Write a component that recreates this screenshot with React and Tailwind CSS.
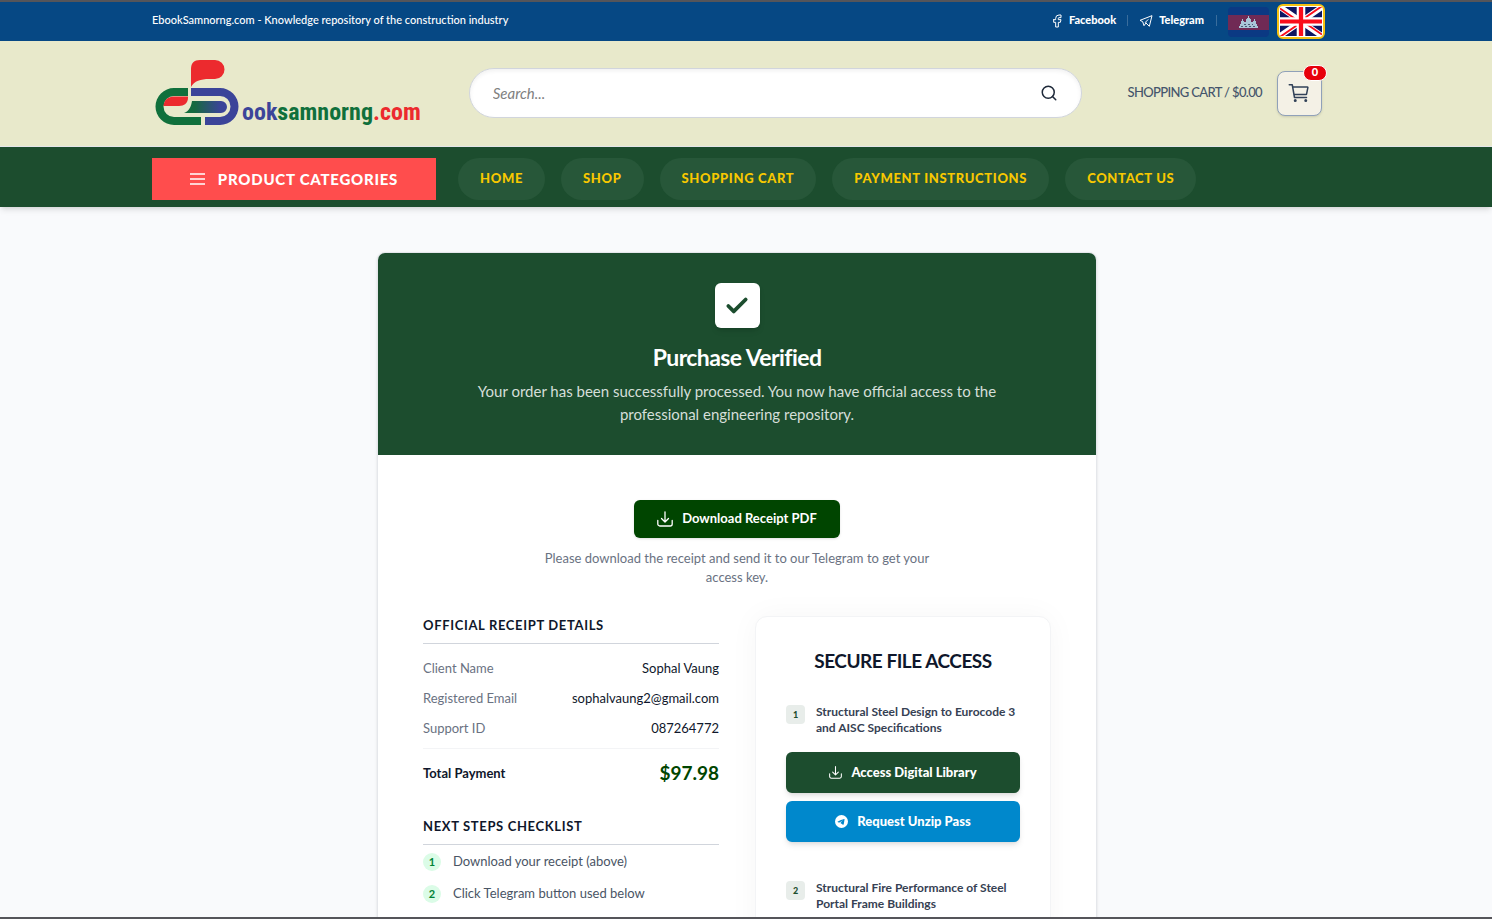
import React from "react";
import { TbBrandFacebook, TbBrandTelegram } from "react-icons/tb";
import { FiSearch } from "react-icons/fi";
import { BsTelegram } from "react-icons/bs";
import { IoCartOutline } from "react-icons/io5";
import { LuCheck } from "react-icons/lu";

function Logo() {
  return (
    <svg viewBox="0 0 268 72" className="h-[72px] w-[268px]" role="img" aria-label="Ebooksamnorng.com">
      <defs>
        <linearGradient id="page" x1="0" x2="1" y1="0" y2="0">
          <stop offset="0" stopColor="#10703c" />
          <stop offset="0.25" stopColor="#17693f" />
          <stop offset="0.85" stopColor="#3b4499" />
        </linearGradient>
      </defs>
      <path d="M36 30V12C36 6 39 3 45 3H60A9.500 9.500 0 0 1 60 22H54C46 22 39 24 36 30Z" fill="#ec2a2e" />
      <path d="M33 31H19A18.200 18.200 0 0 0 19 68H46V60H19A10.500 10.500 0 0 1 19 39H33Z" fill="#10703c" />
      <path d="M8.500 49C9 43 13 39.500 19 39.500H33V41C33 46 29 49 24 49Z" fill="#ec2a2e" />
      <path d="M36 31H65A18.500 18.500 0 0 1 65 68H50V60H65A10.500 10.500 0 0 0 65 39H36Z" fill="#3b4499" />
      <path d="M37 44H66A6 6 0 0 1 66 56H29C34 54 36 50 37 44Z" fill="url(#page)" />
      <text x="87" y="63" fontSize="24" fontWeight="700" fontFamily="'Roboto Condensed','Liberation Sans Narrow',sans-serif">
        <tspan fill="#3b4499">ook</tspan>
        <tspan fill="#10703c">samnorng</tspan>
        <tspan fill="#ec2a2e">.com</tspan>
      </text>
    </svg>
  );
}

function CambodiaFlag() {
  return (
    <svg viewBox="0 0 41 30" className="h-[30px] w-[41px] rounded-sm">
      <rect width="41" height="30" fill="#0b3983" />
      <rect y="8" width="41" height="15" fill="#702a55" />
      <path
        d="M11 21V19H12V17H13V14H14V12H15V14H16V15H18V12H19V11H20V9H21V11H22V12H23V15H25V14H26V12H27V14H28V17H29V19H30V21Z"
        fill="#a9c6d8"
      />
      <path d="M13 19.500H28M16 17.500H25" stroke="#4a5a76" strokeDasharray="2 2" />
    </svg>
  );
}

function UnitedKingdomFlag() {
  return (
    <svg viewBox="0 0 44 31" preserveAspectRatio="none" className="h-full w-full">
      <rect width="44" height="31" fill="#0d1560" />
      <path d="M0 0L44 31M44 0L0 31" stroke="#fff" strokeWidth="6" />
      <path d="M0 1.500L20 15.500M24 15.500L44 29.500M44 -1L22 14.500M22 16.500L0 32" stroke="#fa0d1b" strokeWidth="2" />
      <path d="M22 0V31M0 15.500H44" stroke="#fff" strokeWidth="9" />
      <path d="M22 0V31M0 15.500H44" stroke="#fa0d1b" strokeWidth="4.500" />
    </svg>
  );
}

function DownloadIcon({ className }) {
  return (
    <svg
      viewBox="0 0 16 16"
      className={className}
      fill="none"
      stroke="currentColor"
      strokeWidth="1.300"
      strokeLinecap="round"
      strokeLinejoin="round"
      aria-hidden="true"
    >
      <path d="M8 0.800V10.800M4.500 7.500L8 11L11.500 7.500M0.800 9.500V13A2 2 0 0 0 2.800 15H13.200A2 2 0 0 0 15.200 13V9.500" />
    </svg>
  );
}

const navItems = ["HOME", "SHOP", "SHOPPING CART", "PAYMENT INSTRUCTIONS", "CONTACT US"];

const receipt = [
  ["Client Name", "Sophal Vaung"],
  ["Registered Email", "sophalvaung2@gmail.com"],
  ["Support ID", "087264772"],
];

const steps = ["Download your receipt (above)", "Click Telegram button used below"];

const files = [
  { name: "Structural Steel Design to Eurocode 3 and AISC Specifications", ready: true },
  { name: "Structural Fire Performance of Steel Portal Frame Buildings", ready: false },
];

function Container({ className, children }) {
  return (
    <div className="pr-[18px]">
      <div className={"mx-auto w-full max-w-[1170px] " + className}>{children}</div>
    </div>
  );
}

function TopBar() {
  return (
    <div className="bg-[#064884] text-[11px] text-white">
      <Container className="flex h-[39px] items-center justify-between">
        <p className="pb-[2px] font-medium">EbookSamnorng.com - Knowledge repository of the construction industry</p>
        <div className="flex items-center">
          <a href="#facebook" className="flex items-center gap-1 pb-[2px] font-black">
            <TbBrandFacebook className="size-4" strokeWidth={1.5} />
            Facebook
          </a>
          <span className="mr-[10px] mb-[2px] ml-[11px] h-[11px] w-px bg-[#3a6d9c]" />
          <a href="#telegram" className="flex items-center gap-[5px] pb-[2px] font-black">
            <TbBrandTelegram className="size-4" strokeWidth={1.5} />
            Telegram
          </a>
          <span className="mr-[11px] mb-[2px] ml-3 h-[11px] w-px bg-[#3a6d9c]" />
          <button type="button" aria-label="Khmer">
            <CambodiaFlag />
          </button>
          <button
            type="button"
            aria-label="English"
            className="-mr-[3px] ml-2 h-[35px] w-[48px] overflow-hidden rounded-md border-2 border-[#f5c211] bg-white p-px"
          >
            <UnitedKingdomFlag />
          </button>
        </div>
      </Container>
    </div>
  );
}

function Header() {
  return (
    <header className="border-b border-gray-200 bg-[#e8e9cb]">
      <Container className="flex h-[105px] items-center justify-between pb-px">
        <a href="#home" className="pl-[3px]">
          <Logo />
        </a>
        <form className="flex h-[50px] w-[613px] items-center rounded-full border border-gray-300 bg-white pr-[23px] pl-[23px] shadow-[inset_0_2px_4px_rgba(0,0,0,0.06)]">
          <input
            type="search"
            aria-label="Search"
            placeholder="Search..."
            className="min-w-0 flex-1 bg-transparent text-[15px] italic outline-none placeholder:text-[#808080]"
          />
          <button type="submit" aria-label="Submit search" className="text-gray-800">
            <FiSearch className="size-[18px]" />
          </button>
        </form>
        <div className="flex items-center gap-[15px]">
          <span className="text-[13px] font-medium tracking-tighter text-slate-600">SHOPPING CART / $0.00</span>
          <button
            type="button"
            aria-label="Open cart"
            className="relative flex size-[45px] items-center justify-center rounded-lg border border-slate-400 bg-[#f4f1e6] text-slate-700 shadow-sm"
          >
            <IoCartOutline className="size-6" />
            <span className="absolute -top-[7px] -right-[6px] flex h-4 w-6 items-center justify-center rounded-full border border-white bg-[#e7000b] text-[11px] font-black text-white">
              0
            </span>
          </button>
        </div>
      </Container>
    </header>
  );
}

function Nav() {
  return (
    <nav className="relative bg-[#1c4d2e] shadow-md">
      <Container className="flex h-[60px] items-center gap-[22px]">
        <button
          type="button"
          className="mt-1 flex h-[42px] w-[284px] items-center justify-center gap-[13px] bg-[#ff4d4d] text-[15px] font-black tracking-wider text-white"
        >
          <svg viewBox="0 0 15 13" className="h-[13px] w-[15px]" fill="none" stroke="currentColor" strokeWidth="1.500">
            <path d="M0 1H15M0 6H15M0 11H15" />
          </svg>
          PRODUCT CATEGORIES
        </button>
        <div className="mt-1 flex gap-4">
          {navItems.map((item) => (
            <a
              key={item}
              href="#nav"
              className="flex h-[42px] items-center rounded-full bg-[#275739] px-[22px] text-[13px] font-black tracking-wider text-[#f8c800]"
            >
              {item}
            </a>
          ))}
        </div>
      </Container>
    </nav>
  );
}

function SectionTitle({ children }) {
  return (
    <h2 className="border-b border-gray-300 pb-2 text-[13px] leading-[19px] font-bold tracking-wider text-slate-900">
      {children}
    </h2>
  );
}

function ReceiptDetails() {
  return (
    <div>
      <SectionTitle>OFFICIAL RECEIPT DETAILS</SectionTitle>
      <dl className="pt-[14px] text-[13px] leading-5">
        {receipt.map(([label, value]) => (
          <div key={label} className="mb-[10px] flex justify-between">
            <dt className="text-gray-500">{label}</dt>
            <dd className="text-slate-900">{value}</dd>
          </div>
        ))}
        <div className="flex items-center justify-between border-t border-gray-100 pt-[10px]">
          <dt className="font-bold text-slate-900">Total Payment</dt>
          <dd className="text-[19px] leading-7 font-bold text-[#004500]">$97.98</dd>
        </div>
      </dl>
      <div className="pt-[30px]">
        <SectionTitle>NEXT STEPS CHECKLIST</SectionTitle>
        <ol className="flex flex-col gap-3 pt-[6px]">
          {steps.map((step, i) => (
            <li key={step} className="flex gap-3 text-[13px] leading-5 text-gray-600">
              <span className="mt-[2px] flex size-[18px] shrink-0 items-center justify-center rounded-full bg-green-100 text-[11px] font-bold text-green-700">
                {i + 1}
              </span>
              {step}
            </li>
          ))}
        </ol>
      </div>
    </div>
  );
}

function FileAccess() {
  return (
    <div className="rounded-xl border border-gray-100 bg-white px-[30px] pt-[30px] pb-[30px] shadow-[0_0_30px_rgba(0,0,0,0.04)]">
      <h2 className="mb-[30px] text-center text-[19px] leading-[27px] font-bold tracking-tight text-slate-900">
        SECURE FILE ACCESS
      </h2>
      <div className="flex flex-col gap-[38px]">
        {files.map(({ name, ready }, i) => (
          <div key={name}>
            <div className="flex gap-[11px]">
              <span className="mt-px flex size-[19px] shrink-0 items-center justify-center rounded-sm bg-[#e8edea] text-[9px] font-black text-[#1c4d2e]">
                {i + 1}
              </span>
              <p className="text-[12px] leading-4 font-bold text-gray-700">{name}</p>
            </div>
            {ready && (
              <>
                <a
                  href="#library"
                  className="mt-4 flex h-[41px] items-center justify-center gap-[9px] rounded-md bg-[#1c4d2e] text-[13px] font-black text-white shadow-md"
                >
                  <DownloadIcon className="size-[13px]" />
                  Access Digital Library
                </a>
                <a
                  href="#unzip"
                  className="mt-2 flex h-[41px] items-center justify-center gap-[9px] rounded-md bg-[#0088cc] text-[13px] font-black text-white shadow-md"
                >
                  <BsTelegram className="size-[13px]" />
                  Request Unzip Pass
                </a>
              </>
            )}
          </div>
        ))}
      </div>
    </div>
  );
}

export default function App() {
  return (
    <div className="flex h-screen flex-col border-y-2 border-[#55555a] bg-[#f9fafc] font-['Lato',sans-serif]">
      <TopBar />
      <Header />
      <Nav />
      <main className="min-h-0 flex-1 overflow-y-auto pt-[45px] pr-[18px] [scrollbar-width:none]">
        <article className="mx-auto max-w-[720px] overflow-hidden rounded-lg border border-gray-200 bg-white shadow-sm">
          <div className="flex flex-col items-center bg-[#1c4d2e] pt-[30px] pb-[29px] text-center">
            <div className="flex size-[45px] items-center justify-center rounded-md bg-white text-[#1c4d2e] shadow-md">
              <LuCheck className="size-[26px]" strokeWidth={3.5} />
            </div>
            <h1 className="mt-[14px] text-[23px] leading-[30px] font-bold tracking-tight text-white">Purchase Verified</h1>
            <p className="mt-2 max-w-[540px] text-[15px] leading-[23px] text-[#d5dfd9]">
              Your order has been successfully processed. You now have official access to the professional engineering
              repository.
            </p>
          </div>
          <div className="px-[45px] pt-[45px] pb-[45px]">
            <div className="flex flex-col items-center">
              <button
                type="button"
                className="flex h-[38px] items-center gap-[9px] rounded-md bg-[#004500] px-[23px] text-[13px] font-bold text-white shadow-sm"
              >
                <DownloadIcon className="size-4" />
                Download Receipt PDF
              </button>
              <p className="mt-[11px] max-w-[420px] text-center text-[13px] leading-[19px] text-gray-500">
                Please download the receipt and send it to our Telegram to get your access key.
              </p>
            </div>
            <div className="mt-[29px] grid grid-cols-2 gap-9">
              <ReceiptDetails />
              <FileAccess />
            </div>
          </div>
        </article>
      </main>
    </div>
  );
}
